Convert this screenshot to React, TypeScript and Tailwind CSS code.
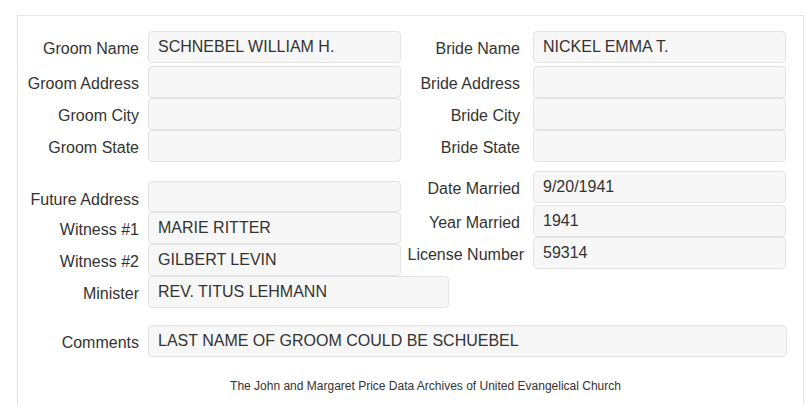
import React from 'react';

type FieldProps = {
  label: string;
  value?: string;
  labelWidth: string;
  gap: string;
  inputWidth: string;
  className?: string;
  labelClass?: string;
};

function Field({ label, value, labelWidth, gap, inputWidth, className, labelClass }: FieldProps) {
  return (
    <div className={`flex items-center ${gap} ${className ?? ''}`}>
      <div className={`${labelWidth} shrink-0 text-right text-[16px] leading-none pt-[3px] text-[#333333] whitespace-nowrap ${labelClass ?? ''}`}>
        {label}
      </div>
      <div
        className={`${inputWidth} h-8 shrink-0 flex items-center pl-[9px] rounded-[4px] border border-[#e3e3e3] bg-[#f7f7f7] text-[16px] text-[#333333] whitespace-nowrap`}
      >
        {value}
      </div>
    </div>
  );
}

export default function App() {
  const left = { labelWidth: 'w-[121px]', gap: 'gap-[9px]', inputWidth: 'w-[253px]' };
  const right = { labelWidth: 'w-[119px]', gap: 'gap-[13px]', inputWidth: 'w-[253px]' };

  return (
    <div className="w-[805px] h-[405px] overflow-hidden bg-white" style={{ fontFamily: '"Liberation Sans", Arial, sans-serif' }}>
      <div className="ml-[17px] mt-[15px] w-[787px] h-[400px] border-t border-l border-r border-[#e5e5e5] pt-[15px]">
        {/* Names, addresses */}
        <div className="flex">
          <div className="flex flex-col">
            <Field {...left} label="Groom Name" value="SCHNEBEL WILLIAM H." className="mb-[3px]" />
            <Field {...left} label="Groom Address" />
            <Field {...left} label="Groom City" />
            <Field {...left} label="Groom State" />
          </div>
          <div className="flex flex-col">
            <Field {...right} label="Bride Name" value="NICKEL EMMA T." className="mb-[3px]" />
            <Field {...right} label="Bride Address" />
            <Field {...right} label="Bride City" />
            <Field {...right} label="Bride State" />
          </div>
        </div>

        {/* Witnesses, marriage details */}
        <div className="flex items-start">
          <div className="flex flex-col mt-[19px]">
            <Field {...left} label="Future Address" className="h-[31px] [&>div:last-child]:h-[31px]" labelClass="pt-[6px]" />
            <Field {...left} label="Witness #1" value="MARIE RITTER" />
            <Field {...left} label="Witness #2" value="GILBERT LEVIN" />
            <Field {...left} inputWidth="w-[301px]" label="Minister" value="REV. TITUS LEHMANN" />
          </div>
          <div className="flex flex-col mt-[9px] -ml-[48px]">
            <Field {...right} label="Date Married" value="9/20/1941" className="mb-[2px]" />
            <Field {...right} label="Year Married" value="1941" />
            <Field {...right} labelWidth="w-[123px]" gap="gap-[9px]" label="License Number" value="59314" />
          </div>
        </div>

        {/* Comments */}
        <div className="mt-[17px]">
          <Field {...left} inputWidth="w-[639px]" label="Comments" value="LAST NAME OF GROOM COULD BE SCHUEBEL" />
        </div>

        <div className="mt-[20px] pl-[30px] text-center text-[12px] text-[#333333]">
          The John and Margaret Price Data Archives of United Evangelical Church
        </div>
      </div>
    </div>
  );
}
